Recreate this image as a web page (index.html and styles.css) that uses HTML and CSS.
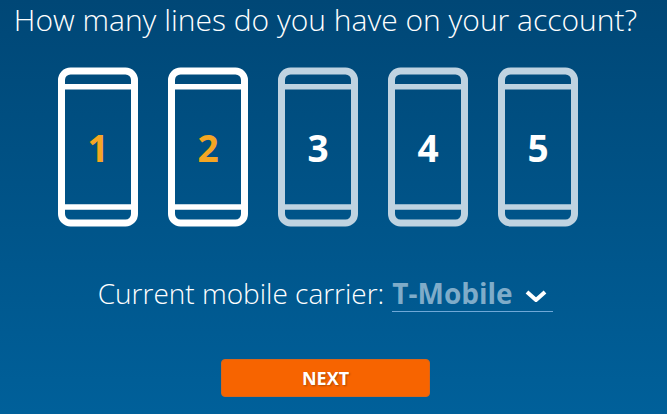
FILE: index.html
```html
<!DOCTYPE html>
<html lang="en">
<head>
    <meta charset="UTF-8">
    <meta name="viewport" content="width=device-width, initial-scale=1.0">
    <title>Your account</title>
    <link rel="stylesheet" href="styles.css">
</head>
<body>
    <svg class="defs" width="0" height="0" aria-hidden="true">
        <symbol id="phone" viewBox="0 0 80 160">
            <rect x="3.5" y="4" width="73" height="152" rx="9" fill="none" stroke="currentColor" stroke-width="7"/>
            <path d="M7 19.8h66M7 140h66" stroke="currentColor" stroke-width="5.4"/>
        </symbol>
    </svg>

    <form class="container">
        <h1 id="linesTitle">How many lines do you have on your account?</h1>

        <div class="lines" role="group" aria-labelledby="linesTitle">
            <button type="button" class="line active"><svg class="phone"><use href="#phone"/></svg><span>1</span></button>
            <button type="button" class="line active"><svg class="phone"><use href="#phone"/></svg><span>2</span></button>
            <button type="button" class="line"><svg class="phone"><use href="#phone"/></svg><span>3</span></button>
            <button type="button" class="line"><svg class="phone"><use href="#phone"/></svg><span>4</span></button>
            <button type="button" class="line"><svg class="phone"><use href="#phone"/></svg><span>5</span></button>
        </div>

        <div class="carrier">
            <label for="carrier">Current mobile carrier:</label>
            <div class="select-box">
                <select id="carrier">
                    <option>T-Mobile</option>
                </select>
                <svg class="chevron" viewBox="0 0 22 12" aria-hidden="true">
                    <path d="M2 2l9 8 9-8" fill="none" stroke="#fff" stroke-width="4"/>
                </svg>
            </div>
        </div>

        <button type="submit" class="next">NEXT</button>
    </form>
</body>
</html>
```

FILE: styles.css
```css
* {
    box-sizing: border-box;
}

body {
    margin: 0;
    min-height: 100vh;
    background: linear-gradient(#004776, #00609a);
    color: #fff;
    font-family: "Open Sans", sans-serif;
}

.defs {
    position: absolute;
}

.container {
    display: flex;
    flex-direction: column;
    align-items: center;
    padding-right: 16px;
}

h1 {
    margin: 0;
    font-size: 30px;
    font-weight: 300;
    line-height: 40px;
    text-align: center;
}

.lines {
    display: flex;
    gap: 30px;
    margin-top: 27px;
    padding-right: 15px;
}

.line {
    display: grid;
    place-items: center;
    padding: 0;
    border: none;
    background: none;
    color: #fff;
    font-family: inherit;
    font-size: 37px;
    font-weight: 700;
    cursor: pointer;
}

.line > * {
    grid-area: 1 / 1;
}

.line.active {
    color: #f5a623;
}

.phone {
    width: 80px;
    height: 160px;
    color: #bfd3e1;
}

.active .phone {
    color: #fff;
}

.carrier {
    display: flex;
    gap: 8px;
    margin-top: 47px;
    font-size: 28px;
    font-weight: 300;
    line-height: 38px;
}

.select-box {
    display: grid;
    align-items: center;
    width: 161px;
    border-bottom: 1px solid #6fa8d8;
}

.select-box > * {
    grid-area: 1 / 1;
}

select {
    width: 100%;
    height: 37px;
    padding: 0;
    appearance: none;
    border: none;
    background: none;
    color: #7facc9;
    font: inherit;
    font-weight: 700;
    cursor: pointer;
}

.chevron {
    justify-self: end;
    width: 22px;
    height: 12px;
    margin: 6px 6px 0 0;
    pointer-events: none;
}

.next {
    width: 209px;
    height: 38px;
    margin-top: 47px;
    padding: 0;
    border: 1px solid #d9661a;
    border-radius: 4px;
    background-color: #f76400;
    color: #fff;
    font-family: inherit;
    font-size: 18px;
    font-weight: 700;
    text-shadow: 1px 1px 2px rgba(0, 0, 0, 0.3);
    cursor: pointer;
}
```
